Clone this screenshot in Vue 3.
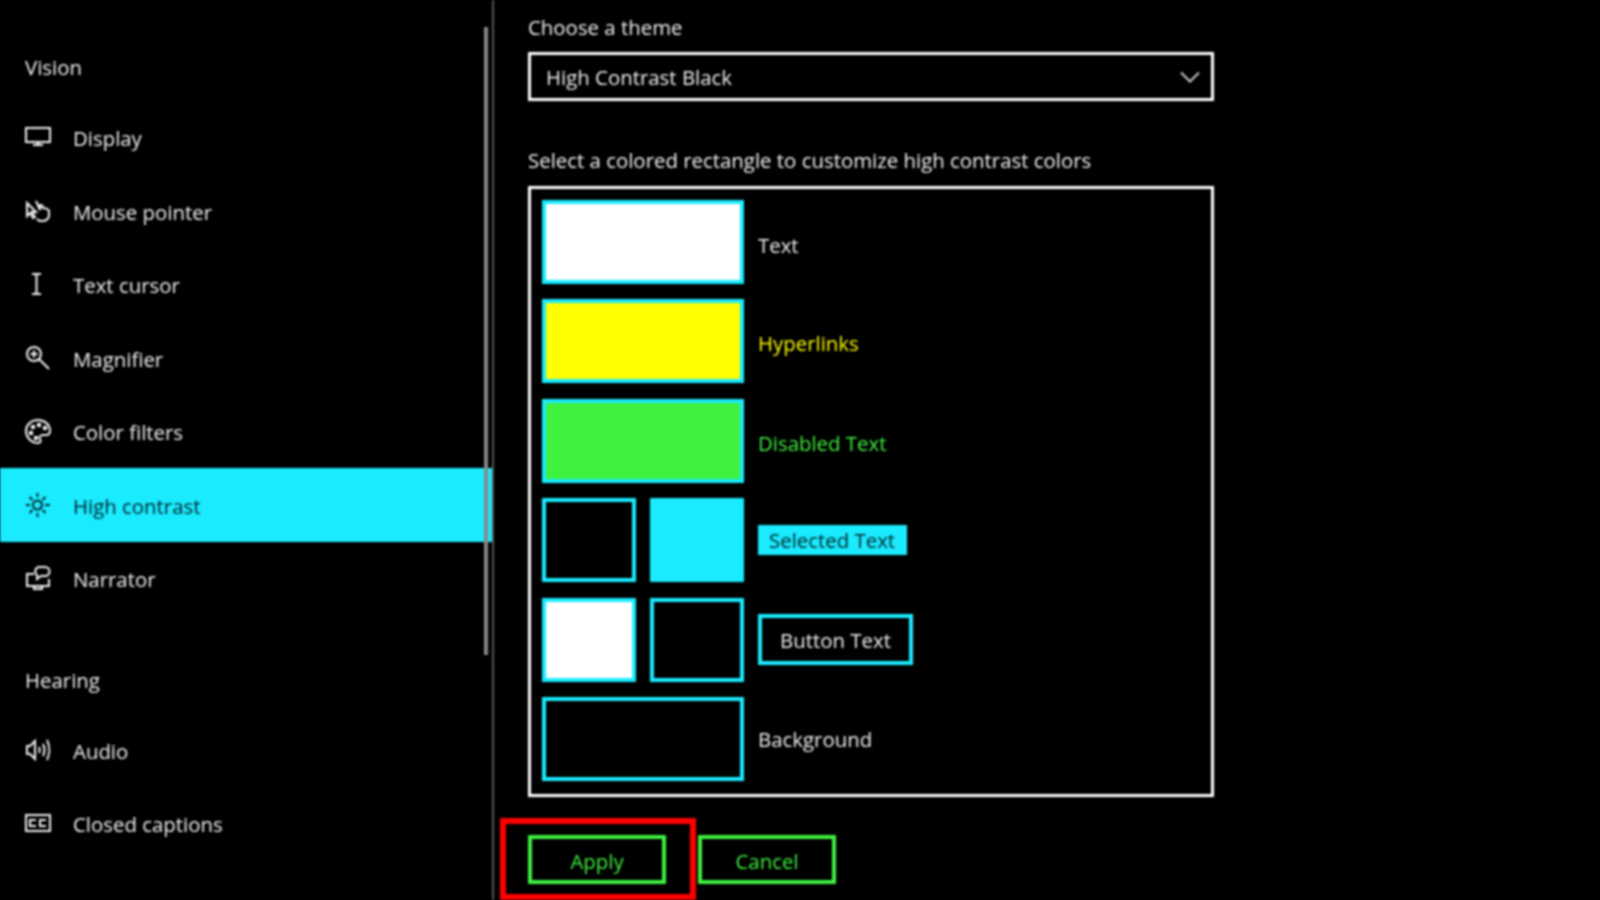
<script setup>
const vision = [
  { label: 'Display', icon: 'display' },
  { label: 'Mouse pointer', icon: 'pointer' },
  { label: 'Text cursor', icon: 'cursor' },
  { label: 'Magnifier', icon: 'magnifier' },
  { label: 'Color filters', icon: 'palette' },
  { label: 'High contrast', icon: 'sun', active: true },
  { label: 'Narrator', icon: 'narrator' },
]
const hearing = [
  { label: 'Audio', icon: 'audio' },
  { label: 'Closed captions', icon: 'cc' },
]
const paths = {
  display: 'M1 4h24v14H1zM13 18v2M8 21h10',
  pointer: 'M2 5v13l3-3 3 5 2-1-3-5h4zM11 3l4 9V7c2 0 3 1 3 3 3 0 5 1 6 3v4a6 6 0 0 1-6 6h-2a6 6 0 0 1-4-2',
  cursor: 'M7 3h9M11.500 3v20M7 23h9',
  magnifier: 'M9 2a7 7 0 1 1 0 14a7 7 0 0 1 0-14zM14 14l10 10M5.500 9h7M9 5.500v7',
  palette: 'M13 2C6 2 1 7 1 13s5 12 12 12c3 0 3-2 2-4s0-4 3-4h3c2 0 4-1 4-4C25 6 19 2 13 2zM7 8h2v2H7zM13 6h2v2h-2zM19 9h2v2h-2zM5 14h2v2H5zM10 19h2v2h-2z',
  sun: 'M12.500 8.500a4.500 4.500 0 1 1 0 9a4.500 4.500 0 0 1 0-9zM12.500 1v4M12.500 21v4M1 13h4M20 13h5M4.500 5l3 3M17.500 18l3 3M4.500 21l3-3M17.500 8l3-3',
  narrator: 'M9 9H2v12h22v-7M9 21v3h8v-3M14 2h6a4 4 0 0 1 0 9h-4l-4 3v-4a4.500 4.500 0 0 1 2-8z',
  audio: 'M2 9v8h3l5 5V4L5 9zM14 10c1 2 1 4 0 6M18 7c2 4 2 8 0 12M22 3c3 6 3 14 0 20',
  cc: 'M1 5h24v16H1zM11 10H5v6h6M21 10h-6v6h6',
}
const swatches = [
  { label: 'Text', cls: 'text-l', cells: ['white wide'] },
  { label: 'Hyperlinks', cls: 'link-l', cells: ['yellow wide'] },
  { label: 'Disabled Text', cls: 'dis-l', cells: ['green wide'] },
  { label: 'Selected Text', cls: 'sel-l', cells: ['black', 'cyan'] },
  { label: 'Button Text', cls: 'btn-l', cells: ['white', 'black'] },
  { label: 'Background', cls: 'bg-l', cells: ['black wide'] },
]
</script>

<template>
  <div class="screen">
    <aside class="sidebar">
      <h2 class="heading first">Vision</h2>
      <div v-for="item in vision" :key="item.label" class="nav" :class="{ active: item.active }">
        <svg class="icon" viewBox="0 0 26 26"><path :d="paths[item.icon]" /></svg>
        <span class="nav-text">{{ item.label }}</span>
      </div>
      <h2 class="heading second">Hearing</h2>
      <div v-for="item in hearing" :key="item.label" class="nav">
        <svg class="icon" viewBox="0 0 26 26"><path :d="paths[item.icon]" /></svg>
        <span class="nav-text">{{ item.label }}</span>
      </div>
      <div class="scrollbar"></div>
    </aside>
    <main class="main">
      <div class="label top">Choose a theme</div>
      <div class="select">
        <span>High Contrast Black</span>
        <svg class="chevron" viewBox="0 0 20 12"><path d="M1 1.500l9 9 9-9" /></svg>
      </div>
      <div class="label sub">Select a colored rectangle to customize high contrast colors</div>
      <div class="panel">
        <div v-for="row in swatches" :key="row.label" class="row">
          <div class="cells">
            <div v-for="c in row.cells" :key="c" class="cell" :class="c"></div>
          </div>
          <span class="row-label" :class="row.cls">{{ row.label }}</span>
        </div>
      </div>
      <div class="actions">
        <div class="highlight"><button class="action">Apply</button></div>
        <button class="action">Cancel</button>
      </div>
    </main>
  </div>
</template>

<style>
html, body { margin: 0; background: #000; }
</style>

<style scoped>
.screen {
  width: 1600px;
  height: 900px;
  overflow: hidden;
  display: flex;
  background: #000;
  color: #f2f2f2;
  font-family: "Open Sans", "Noto Sans", sans-serif;
  font-size: 20.400px;
  filter: blur(0.8px);
}
.sidebar {
  position: relative;
  width: 492px;
  height: 900px;
  flex: none;
  border-right: 2px solid #555;
}
.scrollbar {
  position: absolute;
  right: 4px;
  top: 27px;
  width: 4px;
  height: 628px;
  background: #888;
}
.heading {
  margin: 0;
  padding-left: 25px;
  font-size: 20.400px;
  font-weight: 400;
  line-height: 30px;
}
.heading.first { padding-top: 52px; padding-bottom: 18.500px; }
.heading.second { padding-top: 50px; padding-bottom: 18px; }
.nav {
  height: 73.500px;
  display: flex;
  align-items: center;
  gap: 22px;
  padding-left: 25px;
}
.nav-text { padding-top: 2px; }
.nav.active { background: #1aebff; color: #04262c; }
.icon {
  width: 26px;
  height: 26px;
  flex: none;
  fill: none;
  stroke: currentColor;
  stroke-width: 2;
}
.main {
  padding-left: 34px;
  width: 686px;
  flex: none;
  display: flex;
  flex-direction: column;
}
.label { line-height: 30px; }
.label.top { margin-top: 12px; }
.label.sub { margin-top: 44px; }
.select {
  box-sizing: border-box;
  height: 49px;
  margin-top: 10px;
  border: 3px solid #fff;
  padding: 0 11px 0 15px;
  display: flex;
  align-items: center;
  justify-content: space-between;
}
.chevron {
  width: 20px;
  height: 12px;
  fill: none;
  stroke: #ccc;
  stroke-width: 2;
}
.panel {
  box-sizing: border-box;
  height: 611px;
  margin-top: 11px;
  border: 3px solid #fff;
  padding: 11px;
  display: flex;
  flex-direction: column;
  gap: 15.400px;
}
.row {
  height: 84px;
  display: flex;
  align-items: center;
  gap: 14px;
}
.cells {
  width: 202px;
  height: 84px;
  display: flex;
  gap: 14px;
  flex: none;
}
.cell {
  box-sizing: border-box;
  width: 94px;
  height: 84px;
  border: 4px solid #1aebff;
}
.cell.wide { width: 202px; }
.white { background: #fff; }
.yellow { background: #ffff00; }
.green { background: #3ff23f; }
.cyan { background: #1aebff; }
.black { background: #000; }
.row-label { line-height: 30px; }
.text-l { padding-top: 6px; }
.link-l { color: #ffff00; padding-top: 4px; }
.dis-l { color: #3ff23f; padding-top: 4px; }
.bg-l { padding-top: 1px; }
.sel-l {
  background: #1aebff;
  color: #04262c;
  padding: 0 12px 0 11px;
}
.btn-l {
  border: 4px solid #1aebff;
  line-height: 42px;
  padding: 1px 18px 0;
}
.actions {
  display: flex;
  align-items: flex-start;
  margin-top: 21px;
  margin-left: -28px;
}
.highlight {
  box-sizing: border-box;
  width: 196px;
  height: 82px;
  border: 6px solid #ff0000;
  padding: 11px 0 0 22px;
  margin-right: 2px;
}
.action {
  box-sizing: border-box;
  width: 138px;
  height: 49px;
  background: #000;
  border: 4px solid #3ff23f;
  color: #3ff23f;
  font: inherit;
  padding: 2px 0 0;
  margin-top: 17px;
}
.highlight .action { margin-top: 0; }
</style>
